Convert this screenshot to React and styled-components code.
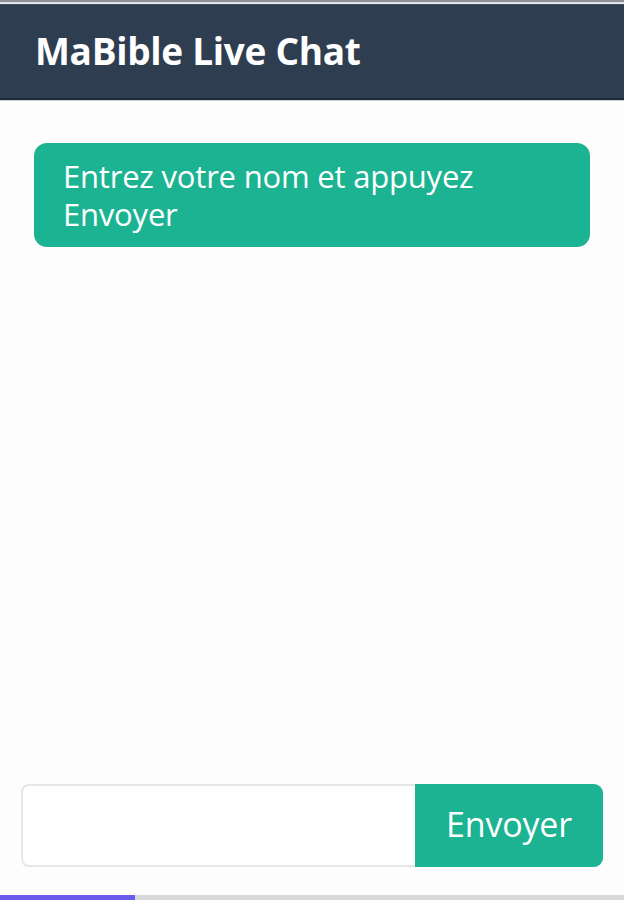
import styled, { createGlobalStyle } from "styled-components";

const GlobalStyle = createGlobalStyle`
  html, body {
    margin: 0;
    padding: 0;
    background: #fff;
    font-family: "Open Sans", "Noto Sans", sans-serif;
  }
  * {
    box-sizing: border-box;
  }
`;

const Page = styled.div`
  width: 624px;
  height: 900px;
  display: flex;
  flex-direction: column;
  background: #fdfdfd;
  overflow: hidden;
`;

const TopEdge = styled.div`
  height: 5px;
  background: linear-gradient(#8d9096 0, #8d9096 2px, #d6d8db 2px, #eef0f2 4px, #3a4a5c 4px);
`;

const Header = styled.header`
  height: 95px;
  background: #2e3e50;
  border-bottom: 2px solid #1f2c3a;
  box-shadow: 0 1px 0 #c9ced4;
  display: flex;
  align-items: center;
  padding: 0 35px 2px;
`;

const Title = styled.h1`
  margin: 0;
  color: #fff;
  font-size: 37px;
  font-weight: 700;
  letter-spacing: -0.3px;
`;

const Messages = styled.div`
  flex: 1;
  padding: 43px 34px 0;
`;

const Bubble = styled.div`
  background: #1bb391;
  color: #fff;
  border-radius: 13px;
  padding: 14px 28px 14px 29px;
  font-size: 31px;
  line-height: 38px;
  letter-spacing: -0.2px;
`;

const InputRow = styled.form`
  display: flex;
  height: 83px;
  margin: 0 21px 28px;
`;

const NameInput = styled.input`
  flex: 1;
  min-width: 0;
  border: 2px solid #e6e6e6;
  border-right: none;
  border-radius: 8px 0 0 8px;
  background: #fff;
  font-family: inherit;
  font-size: 28px;
  padding: 0 16px;
  outline: none;
`;

const SendButton = styled.button`
  width: 188px;
  border: none;
  border-radius: 0 9px 9px 0;
  background: #1bb391;
  color: #fff;
  font-family: inherit;
  font-size: 34px;
  letter-spacing: -0.2px;
  padding: 0 0 4px;
  cursor: pointer;
`;

const BottomEdge = styled.div`
  height: 5px;
  background: linear-gradient(90deg, #6b5cf0 0, #6b5cf0 135px, #d9d9db 135px);
`;

const App = () => {
  return (
    <Page>
      <GlobalStyle />
      <TopEdge />
      <Header>
        <Title>MaBible Live Chat</Title>
      </Header>
      <Messages>
        <Bubble>Entrez votre nom et appuyez Envoyer</Bubble>
      </Messages>
      <InputRow onSubmit={(e) => e.preventDefault()}>
        <NameInput type="text" />
        <SendButton type="submit">Envoyer</SendButton>
      </InputRow>
      <BottomEdge />
    </Page>
  );
};

export default App;
